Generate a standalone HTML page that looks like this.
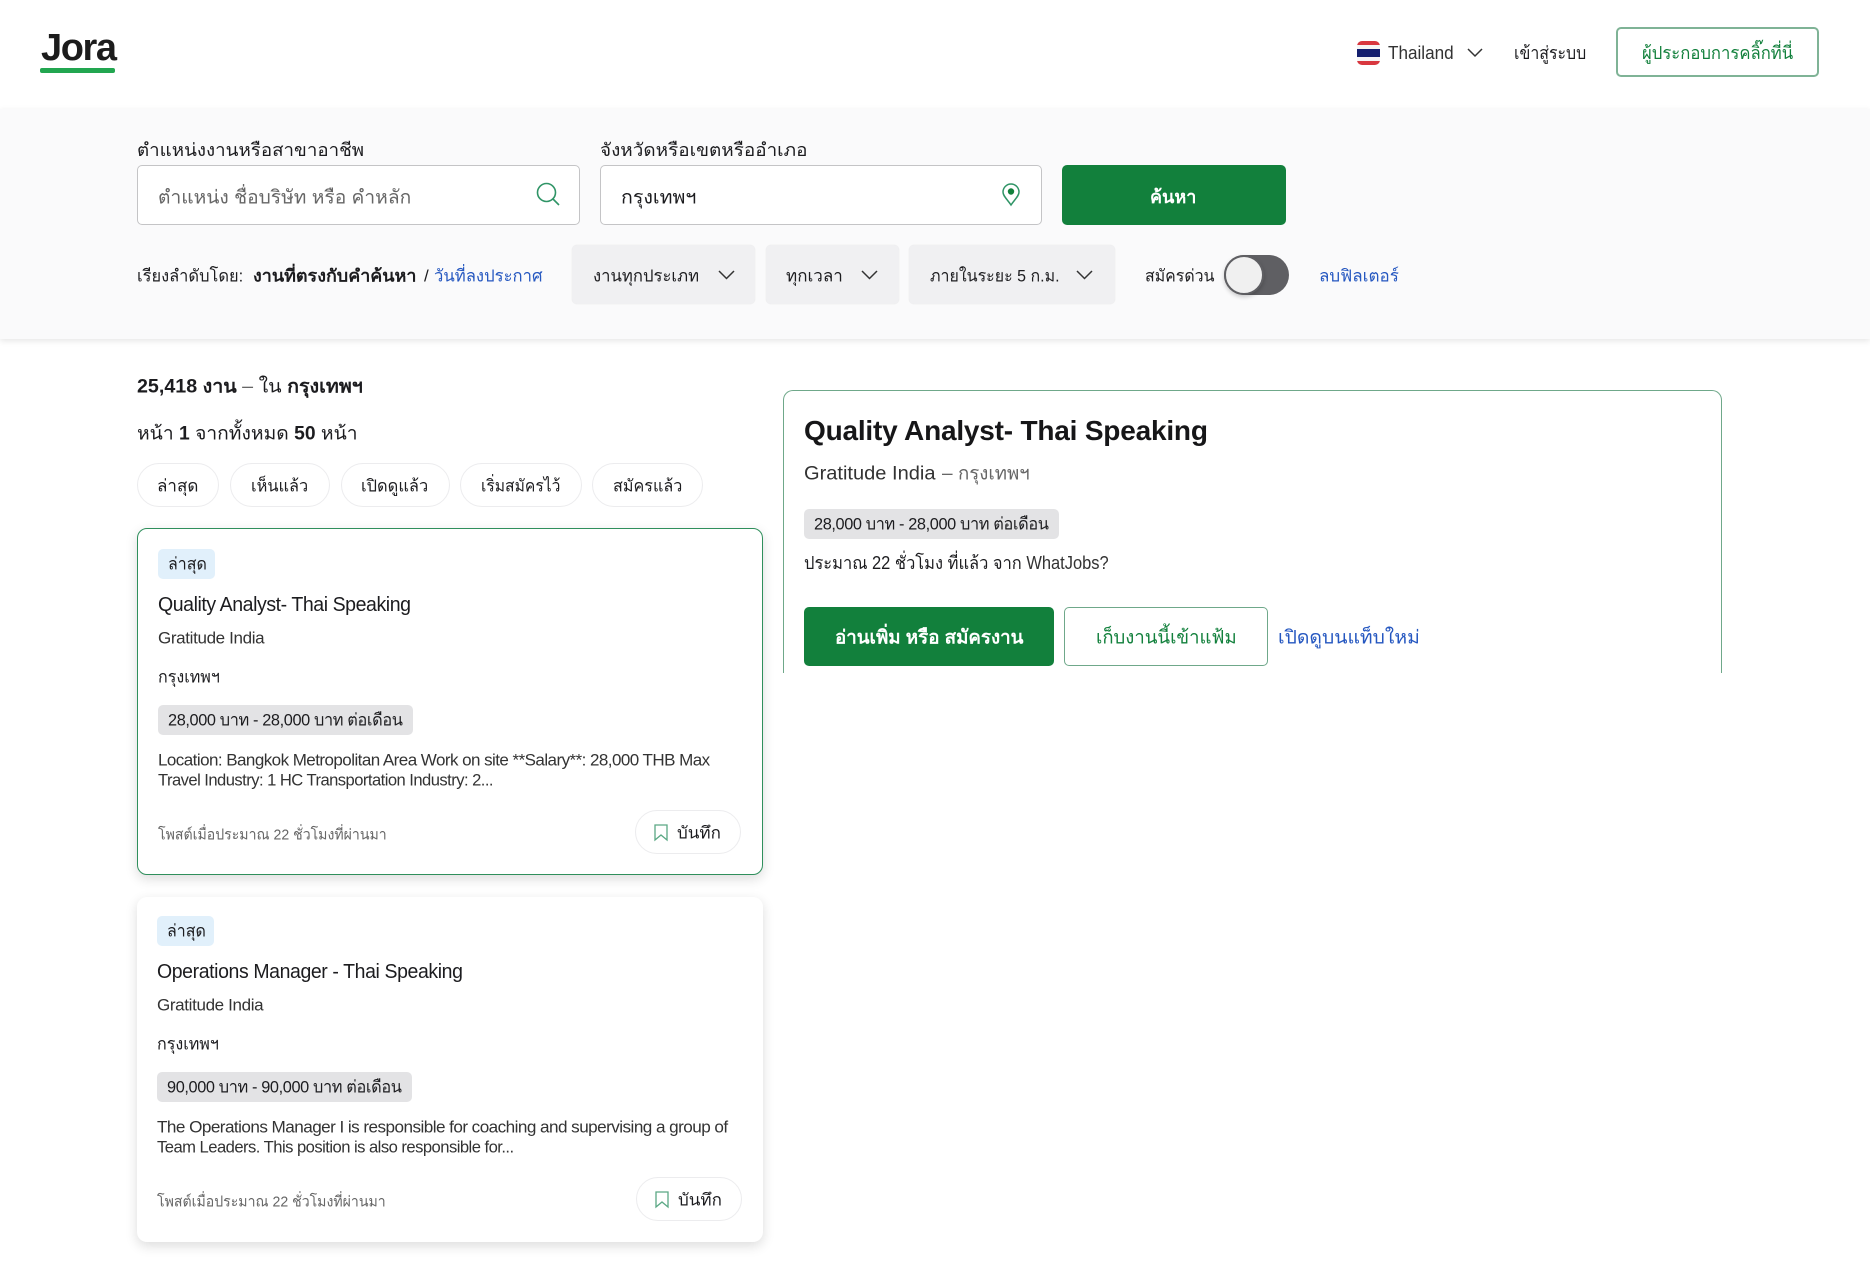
<!DOCTYPE html>
<html lang="th">
<head>
<meta charset="utf-8">
<title>Jora</title>
<style>
*{box-sizing:border-box}
html,body{margin:0;padding:0}
body{width:1870px;height:1261px;position:relative;overflow:hidden;background:#fff;color:#1c1c1f;font-family:"Liberation Sans","Noto Sans CJK JP",sans-serif;font-size:18px}
.b{position:absolute}
.t{position:absolute;white-space:nowrap;line-height:1;transform:translateY(-50%) scaleX(var(--s,1));transform-origin:left center}
.g{color:#666}
.bl{color:#2557c0}
.gr{color:#12803c}
b{font-weight:700}
.pill{position:absolute;background:#f0f0f2;border-radius:5px;box-shadow:0 0 1px #ddd}
.chip{position:absolute;border:1px solid #ececee;border-radius:22px;background:#fff;top:463px;height:44px}
.tag{position:absolute;background:#e1f0fb;border-radius:5px;width:57px;height:30px}
.sal{position:absolute;background:#e3e3e5;border-radius:5px;height:30px}
.card{position:absolute;left:137px;width:626px;background:#fff;border-radius:10px;box-shadow:0 4px 12px rgba(0,0,0,.14)}
.save{position:absolute;height:44px;border:1px solid #ececee;border-radius:22px;background:#fff}
svg{position:absolute;overflow:visible}
</style>
</head>
<body>
<!-- header -->
<span class="t" style="left:41px;top:48px;font-size:38px;font-weight:700;letter-spacing:-1.4px;color:#1c1c1c">Jora</span>
<div class="b" style="left:40px;top:68px;width:75px;height:5px;border-radius:2px;background:#22a650"></div>

<div class="b" style="left:1357px;top:41px;width:23px;height:24px;border-radius:5px;overflow:hidden;background:linear-gradient(#d8373f 0 17%,#f5f5f5 17% 33%,#141f6e 33% 67%,#f5f5f5 67% 83%,#d8373f 83%)"></div>
<span class="t" style="left:1388px;top:53px;font-size:18px;color:#333;--s:.95">Thailand</span>
<svg style="left:1467px;top:47px" width="16" height="12" viewBox="0 0 16 12"><path d="M1 2l7 7 7-7" fill="none" stroke="#333" stroke-width="1.5"/></svg>
<span class="t" style="left:1514px;top:53px;font-size:18px;--s:.884">เข้าสู่ระบบ</span>
<div class="b" style="left:1616px;top:27px;width:203px;height:50px;border:2px solid #7fb396;border-radius:5px;background:#fff"></div>
<span class="t gr" style="left:1642px;top:53px;font-size:18px;--s:.926">ผู้ประกอบการคลิ๊กที่นี่</span>

<!-- filter panel -->
<div class="b" style="left:0;top:109px;width:1870px;height:230px;background:#fafafb;box-shadow:0 2px 6px rgba(0,0,0,.1)"></div>
<span class="t" style="left:137px;top:150px;font-size:18px;--s:1.04">ตำแหน่งงานหรือสาขาอาชีพ</span>
<span class="t" style="left:600px;top:150px;font-size:18px;--s:1.05">จังหวัดหรือเขตหรืออำเภอ</span>
<div class="b" style="left:137px;top:165px;width:443px;height:60px;background:#fff;border:1.5px solid #c4c4c6;border-radius:5px"></div>
<span class="t g" style="left:158px;top:198px;font-size:19px;--s:1.01">ตำแหน่ง ชื่อบริษัท หรือ คำหลัก</span>
<svg style="left:536px;top:182px" width="24" height="24" viewBox="0 0 24 24"><circle cx="10.5" cy="10.500" r="9" fill="none" stroke="#2f9466" stroke-width="1.6"/><path d="M17 17l6 6" stroke="#2f9466" stroke-width="1.6"/></svg>
<div class="b" style="left:600px;top:165px;width:442px;height:60px;background:#fff;border:1.5px solid #c4c4c6;border-radius:5px"></div>
<span class="t" style="left:621px;top:198px;font-size:19px;--s:1.03">กรุงเทพฯ</span>
<svg style="left:1002px;top:183px" width="18" height="23" viewBox="0 0 18 23"><path d="M9 22C5 16 1 13 1 9a8 8 0 0 1 16 0c0 4-4 7-8 13z" fill="none" stroke="#2f9466" stroke-width="1.5"/><circle cx="9" cy="8.500" r="3.2" fill="#12803c"/></svg>
<div class="b" style="left:1062px;top:165px;width:224px;height:60px;background:#12803c;border-radius:5px"></div>
<span class="t" style="left:1150px;top:197px;font-size:18px;color:#fff;font-weight:700">ค้นหา</span>

<span class="t" style="left:137px;top:276px;font-size:17px;--s:.967">เรียงลำดับโดย:</span>
<span class="t" style="left:253px;top:276px;font-size:17px;font-weight:700;--s:1.055">งานที่ตรงกับคำค้นหา</span>
<span class="t" style="left:424px;top:276px;font-size:17px">/</span>
<span class="t bl" style="left:434px;top:276px;font-size:17px;--s:.98">วันที่ลงประกาศ</span>

<div class="pill" style="left:572px;top:245px;width:183px;height:59px"></div>
<span class="t" style="left:593px;top:276px;font-size:17px;--s:.98">งานทุกประเภท</span>
<svg style="left:718px;top:269px" width="17" height="12" viewBox="0 0 17 12"><path d="M1 2l7.500 7.500L16 2" fill="none" stroke="#333" stroke-width="1.5"/></svg>
<div class="pill" style="left:766px;top:245px;width:133px;height:59px"></div>
<span class="t" style="left:786px;top:276px;font-size:17px">ทุกเวลา</span>
<svg style="left:861px;top:269px" width="17" height="12" viewBox="0 0 17 12"><path d="M1 2l7.500 7.500L16 2" fill="none" stroke="#333" stroke-width="1.5"/></svg>
<div class="pill" style="left:909px;top:245px;width:206px;height:59px"></div>
<span class="t" style="left:930px;top:276px;font-size:17px;--s:.94">ภายในระยะ 5 ก.ม.</span>
<svg style="left:1076px;top:269px" width="17" height="12" viewBox="0 0 17 12"><path d="M1 2l7.500 7.500L16 2" fill="none" stroke="#333" stroke-width="1.5"/></svg>

<span class="t" style="left:1145px;top:276px;font-size:17px;--s:.935">สมัครด่วน</span>
<div class="b" style="left:1224px;top:255px;width:65px;height:40px;background:#5f5f63;border-radius:20px"></div>
<div class="b" style="left:1224px;top:255px;width:40px;height:40px;background:#f0f0f0;border:2px solid #5f5f63;border-radius:50%;box-shadow:0 2px 4px rgba(0,0,0,.2)"></div>
<span class="t bl" style="left:1319px;top:276px;font-size:17px">ลบฟิลเตอร์</span>

<!-- results -->
<span class="t" style="left:137px;top:387px;font-size:19px;--s:1.035"><b>25,418 งาน</b> <span class="g">–</span> ใน <b>กรุงเทพฯ</b></span>
<span class="t" style="left:137px;top:434px;font-size:19px;--s:1.013">หน้า <b>1</b> จากทั้งหมด <b>50</b> หน้า</span>

<div class="chip" style="left:137px;width:82px"></div><span class="t" style="left:157px;top:486px;font-size:17px">ล่าสุด</span>
<div class="chip" style="left:230px;width:100px"></div><span class="t" style="left:251px;top:486px;font-size:17px;--s:.96">เห็นแล้ว</span>
<div class="chip" style="left:341px;width:109px"></div><span class="t" style="left:361px;top:486px;font-size:17px;--s:.965">เปิดดูแล้ว</span>
<div class="chip" style="left:460px;width:122px"></div><span class="t" style="left:481px;top:486px;font-size:17px;--s:.92">เริ่มสมัครไว้</span>
<div class="chip" style="left:592px;width:111px"></div><span class="t" style="left:613px;top:486px;font-size:17px;--s:.95">สมัครแล้ว</span>

<!-- card 1 -->
<div class="card" style="top:528px;height:347px;border:1.5px solid #2f8f5c"></div>
<div class="tag" style="left:158px;top:549px"></div>
<span class="t" style="left:168px;top:564px;font-size:17px;--s:.94">ล่าสุด</span>
<span class="t" style="left:158px;top:605px;font-size:20px;letter-spacing:-.45px;--s:.977">Quality Analyst- Thai Speaking</span>
<span class="t" style="left:158px;top:638px;font-size:17px;letter-spacing:-.35px;color:#333">Gratitude India</span>
<span class="t" style="left:158px;top:677px;font-size:17px;--s:.945">กรุงเทพฯ</span>
<div class="sal" style="left:158px;top:705px;width:255px"></div>
<span class="t" style="left:168px;top:720px;font-size:17px;letter-spacing:-.4px;--s:.96">28,000 บาท - 28,000 บาท ต่อเดือน</span>
<span class="t" style="left:158px;top:760px;font-size:17px;letter-spacing:-.55px;color:#333">Location: Bangkok Metropolitan Area Work on site **Salary**: 28,000 THB Max</span>
<span class="t" style="left:158px;top:780px;font-size:17px;letter-spacing:-.55px;color:#333;--s:.975">Travel Industry: 1 HC Transportation Industry: 2...</span>
<span class="t g" style="left:158px;top:835px;font-size:15px;--s:.94">โพสต์เมื่อประมาณ 22 ชั่วโมงที่ผ่านมา</span>
<div class="save" style="left:635px;top:810px;width:106px"></div>
<svg style="left:654px;top:824px" width="14" height="17" viewBox="0 0 14 17"><path d="M1 1h12v15l-6-5-6 5z" fill="none" stroke="#5aa884" stroke-width="1.3"/></svg>
<span class="t" style="left:677px;top:833px;font-size:17px">บันทึก</span>

<!-- card 2 -->
<div class="card" style="top:897px;height:345px"></div>
<div class="tag" style="left:157px;top:916px"></div>
<span class="t" style="left:167px;top:931px;font-size:17px;--s:.94">ล่าสุด</span>
<span class="t" style="left:157px;top:972px;font-size:20px;letter-spacing:-.4px;--s:.973">Operations Manager - Thai Speaking</span>
<span class="t" style="left:157px;top:1005px;font-size:17px;letter-spacing:-.35px;color:#333">Gratitude India</span>
<span class="t" style="left:157px;top:1044px;font-size:17px;--s:.945">กรุงเทพฯ</span>
<div class="sal" style="left:157px;top:1072px;width:255px"></div>
<span class="t" style="left:167px;top:1087px;font-size:17px;letter-spacing:-.4px;--s:.96">90,000 บาท - 90,000 บาท ต่อเดือน</span>
<span class="t" style="left:157px;top:1127px;font-size:17px;letter-spacing:-.55px;color:#333;--s:1.008">The Operations Manager I is responsible for coaching and supervising a group of</span>
<span class="t" style="left:157px;top:1147px;font-size:17px;letter-spacing:-.55px;color:#333;--s:.977">Team Leaders. This position is also responsible for...</span>
<span class="t g" style="left:157px;top:1202px;font-size:15px;--s:.94">โพสต์เมื่อประมาณ 22 ชั่วโมงที่ผ่านมา</span>
<div class="save" style="left:636px;top:1177px;width:106px"></div>
<svg style="left:655px;top:1191px" width="14" height="17" viewBox="0 0 14 17"><path d="M1 1h12v15l-6-5-6 5z" fill="none" stroke="#5aa884" stroke-width="1.3"/></svg>
<span class="t" style="left:678px;top:1200px;font-size:17px">บันทึก</span>

<!-- detail panel -->
<div class="b" style="left:783px;top:390px;width:939px;height:283px;border:1.5px solid #6fa88a;border-bottom:0;border-radius:10px 10px 0 0"></div>
<span class="t" style="left:804px;top:431px;font-size:28px;font-weight:700;letter-spacing:-.2px;color:#161618">Quality Analyst- Thai Speaking</span>
<span class="t" style="left:804px;top:474px;font-size:19px;color:#333;--s:1.055">Gratitude India</span>
<span class="t g" style="left:942px;top:474px;font-size:19px">–</span>
<span class="t g" style="left:958px;top:474px;font-size:19px;--s:.98">กรุงเทพฯ</span>
<div class="sal" style="left:804px;top:509px;width:255px"></div>
<span class="t" style="left:814px;top:524px;font-size:17px;letter-spacing:-.4px;--s:.96">28,000 บาท - 28,000 บาท ต่อเดือน</span>
<span class="t" style="left:804px;top:563px;font-size:18px;--s:.914">ประมาณ 22 ชั่วโมง ที่แล้ว จาก <span style="color:#333">WhatJobs?</span></span>
<div class="b" style="left:804px;top:607px;width:250px;height:59px;background:#12803c;border-radius:5px"></div>
<span class="t" style="left:835px;top:638px;font-size:19px;color:#fff;font-weight:700;--s:.985">อ่านเพิ่ม หรือ สมัครงาน</span>
<div class="b" style="left:1064px;top:607px;width:204px;height:59px;background:#fff;border:1.5px solid #6fa88a;border-radius:5px"></div>
<span class="t gr" style="left:1096px;top:638px;font-size:19px;--s:.975">เก็บงานนี้เข้าแฟ้ม</span>
<span class="t bl" style="left:1278px;top:638px;font-size:19px;--s:1.017">เปิดดูบนแท็บใหม่</span>
</body>
</html>
